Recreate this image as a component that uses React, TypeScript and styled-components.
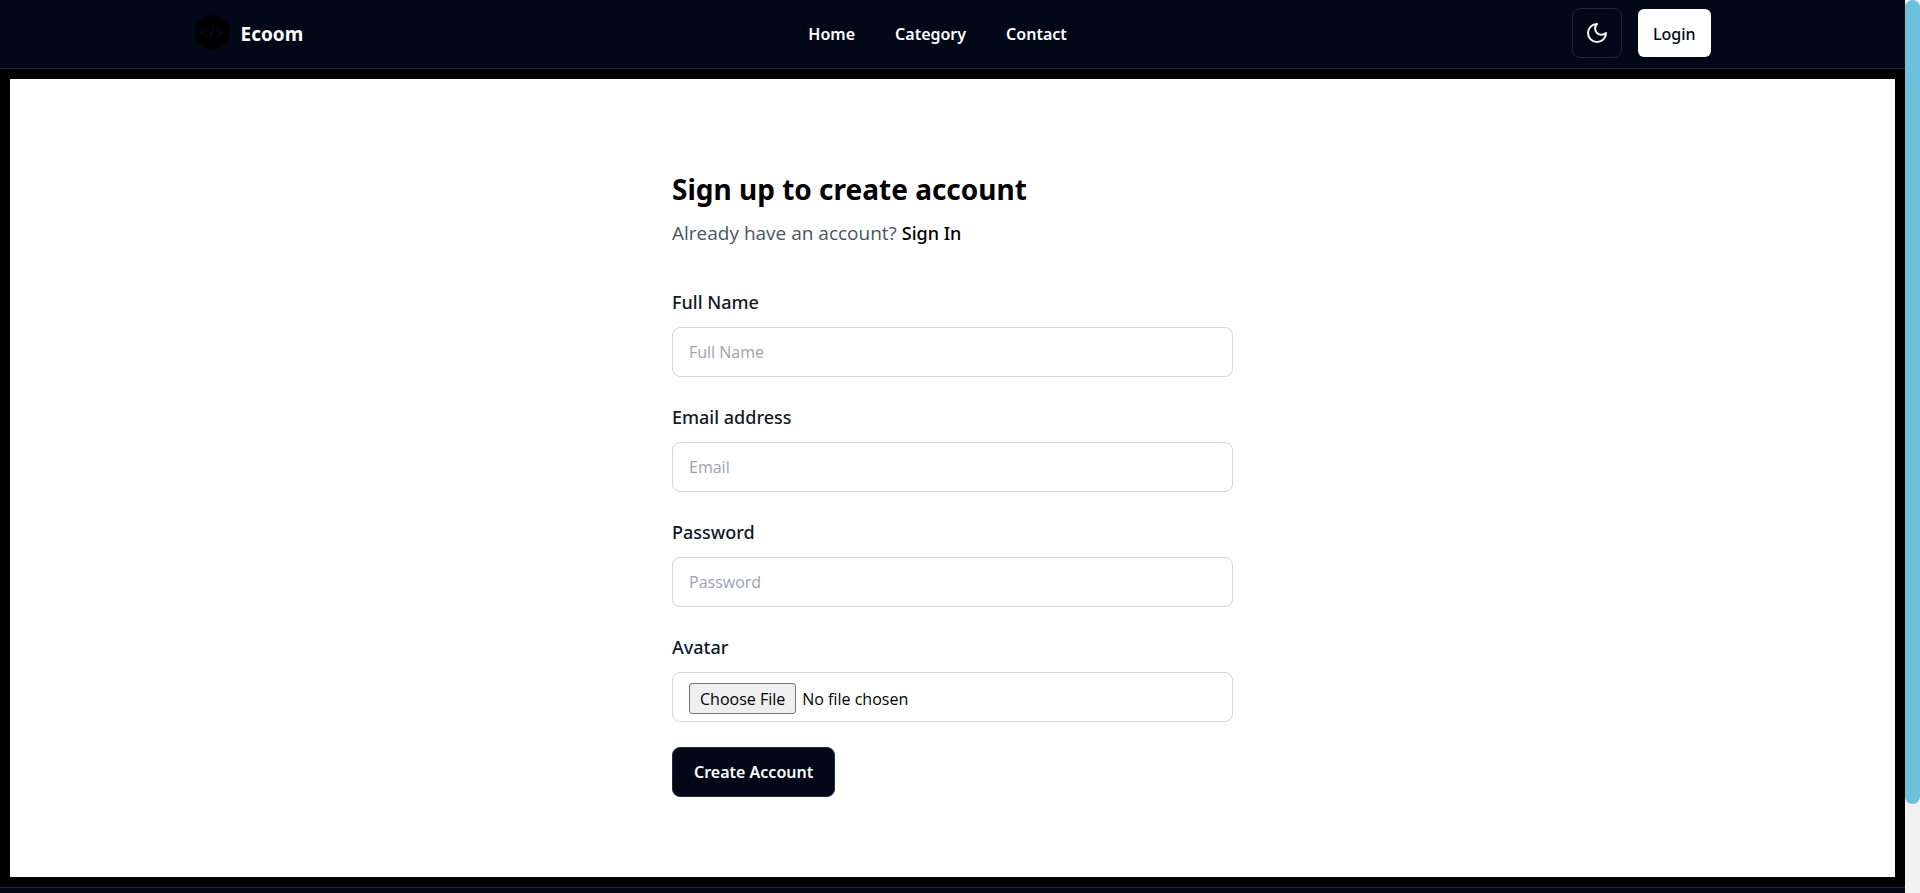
import React from 'react';
import styled, { createGlobalStyle } from 'styled-components';

const GlobalStyle = createGlobalStyle`
  *, *::before, *::after { box-sizing: border-box; }
  body {
    margin: 0;
    background: #020817;
    color: #000;
    font-family: "Noto Sans", "Open Sans", sans-serif;
    font-size: 16px;
    line-height: 24px;
  }
  a { color: inherit; text-decoration: none; }
  button, input { font: inherit; }
`;

const Shell = styled.div`
  display: flex;
  min-height: 100vh;
`;

const Page = styled.div`
  flex: 1;
  min-width: 0;
  display: flex;
  flex-direction: column;
`;

const ScrollTrack = styled.div`
  width: 15px;
  height: 100vh;
  position: sticky;
  top: 0;
  background: #f1f1f1;
`;

const ScrollThumb = styled.div`
  height: 90%;
  border-radius: 8px;
  background: #6bc0dc;
`;

const Header = styled.header`
  border-bottom: 1px solid #1e293b;
  padding: 8px 16px 10px;
`;

const HeaderInner = styled.div`
  max-width: 1516px;
  margin: 0 auto;
  display: flex;
  align-items: center;
  justify-content: space-between;
`;

const Brand = styled.a`
  display: flex;
  align-items: center;
  gap: 12px;
  color: #fff;
  font-size: 19px;
  font-weight: 700;
`;

const BrandName = styled.span`
  padding-top: 2px;
`;

const LogoMark = styled.svg`
  display: block;
  width: 34px;
  height: 38px;
`;

const NavLinks = styled.nav`
  display: flex;
  gap: 40px;
  padding-top: 2px;
  color: #fff;
  font-weight: 600;
`;

const Actions = styled.div`
  display: flex;
  align-items: center;
  gap: 16px;
`;

const ThemeButton = styled.button`
  display: flex;
  align-items: center;
  justify-content: center;
  width: 50px;
  height: 50px;
  padding: 0;
  border: 1px solid #1e293b;
  border-radius: 8px;
  background: transparent;
  color: #f8fafc;
`;

const LoginButton = styled.button`
  height: 48px;
  padding: 2px 15px 0;
  border: 0;
  border-radius: 6px;
  background: #fff;
  color: #020817;
  font-weight: 500;
`;

const Main = styled.main`
  border: 10px solid #000;
  background: #fff;
  padding: 90px 16px 80px;
  display: flex;
  justify-content: center;
`;

const Panel = styled.section`
  width: 100%;
  max-width: 561px;
`;

const Title = styled.h1`
  margin: 0;
  font-size: 28px;
  line-height: 40px;
  font-weight: 700;
`;

const Subtitle = styled.p`
  margin: 10px 0 0;
  color: #4b5563;
  font-family: "Open Sans", sans-serif;
  font-size: 19px;
  line-height: 28px;
`;

const SignInLink = styled.a`
  color: #000;
  font-family: "Noto Sans", sans-serif;
  font-size: 18px;
  font-weight: 500;
`;

const Form = styled.form`
  margin-top: 40px;
  display: flex;
  flex-direction: column;
  align-items: flex-start;
  gap: 25px;
`;

const Field = styled.div`
  width: 100%;
  display: flex;
  flex-direction: column;
  gap: 10px;
`;

const Label = styled.label`
  color: #111827;
  font-size: 18px;
  line-height: 30px;
  font-weight: 500;
`;

const Input = styled.input`
  width: 100%;
  height: 50px;
  padding: 10px 16px;
  border: 1px solid #d1d5db;
  border-radius: 8px;
  background: transparent;
  color: #000;
  font-family: "Open Sans", sans-serif;

  &::placeholder { color: #9ca3af; opacity: 1; }

  &::file-selector-button {
    height: 31px;
    padding: 0 10px;
    border: 1px solid #767676;
    border-radius: 3px;
    background: #efefef;
    color: #000;
    font: inherit;
    margin-inline-end: 6px;
  }
`;

const SubmitButton = styled.button`
  height: 50px;
  padding: 0 21px;
  border: 1px solid #1e293b;
  border-radius: 8px;
  background: #020817;
  color: #fff;
  font-weight: 600;
`;

const Footer = styled.footer`
  flex: 1;
  min-height: 6px;
  border-top: 1px solid #1e293b;
`;

const links = ['Home', 'Category', 'Contact'];

const fields = [
  { id: 'name', label: 'Full Name', type: 'text', placeholder: 'Full Name' },
  { id: 'email', label: 'Email address', type: 'email', placeholder: 'Email' },
  { id: 'password', label: 'Password', type: 'password', placeholder: 'Password' },
  { id: 'avatar', label: 'Avatar', type: 'file' },
];

function Logo() {
  return (
    <LogoMark viewBox="0 0 34 38" aria-hidden="true">
      <path d="M15 1.2q2-1.1 4 0l12.500 7.200q2 1.200 2 3.500v14.200q0 2.300-2 3.500l-12.500 7.200q-2 1.100-4 0l-12.500-7.200q-2-1.200-2-3.500v-14.200q0-2.300 2-3.500z" fill="#000" />
      <path d="M12 15l-5 4 5 4M22 15l5 4-5 4M19 14l-4 10" fill="none" stroke="#020817" strokeWidth="2" strokeLinecap="round" strokeLinejoin="round" />
    </LogoMark>
  );
}

function MoonIcon() {
  return (
    <svg width="24" height="24" viewBox="0 0 24 24" fill="none" stroke="currentColor" strokeWidth="2" strokeLinecap="round" strokeLinejoin="round" aria-hidden="true">
      <path d="M12 3a6 6 0 0 0 9 9 9 9 0 1 1-9-9Z" />
    </svg>
  );
}

export default function App() {
  return (
    <>
      <GlobalStyle />
      <Shell>
        <Page>
          <Header>
            <HeaderInner>
              <Brand href="#"><Logo /><BrandName>Ecoom</BrandName></Brand>
              <NavLinks>
                {links.map((name) => <a key={name} href="#">{name}</a>)}
              </NavLinks>
              <Actions>
                <ThemeButton type="button" aria-label="Toggle theme"><MoonIcon /></ThemeButton>
                <LoginButton type="button">Login</LoginButton>
              </Actions>
            </HeaderInner>
          </Header>
          <Main>
            <Panel>
              <Title>Sign up to create account</Title>
              <Subtitle>Already have an account? <SignInLink href="#">Sign In</SignInLink></Subtitle>
              <Form onSubmit={(e) => e.preventDefault()}>
                {fields.map((f) => (
                  <Field key={f.id}>
                    <Label htmlFor={f.id}>{f.label}</Label>
                    <Input id={f.id} type={f.type} placeholder={f.placeholder} />
                  </Field>
                ))}
                <SubmitButton type="submit">Create Account</SubmitButton>
              </Form>
            </Panel>
          </Main>
          <Footer />
        </Page>
        <ScrollTrack><ScrollThumb /></ScrollTrack>
      </Shell>
    </>
  );
}
